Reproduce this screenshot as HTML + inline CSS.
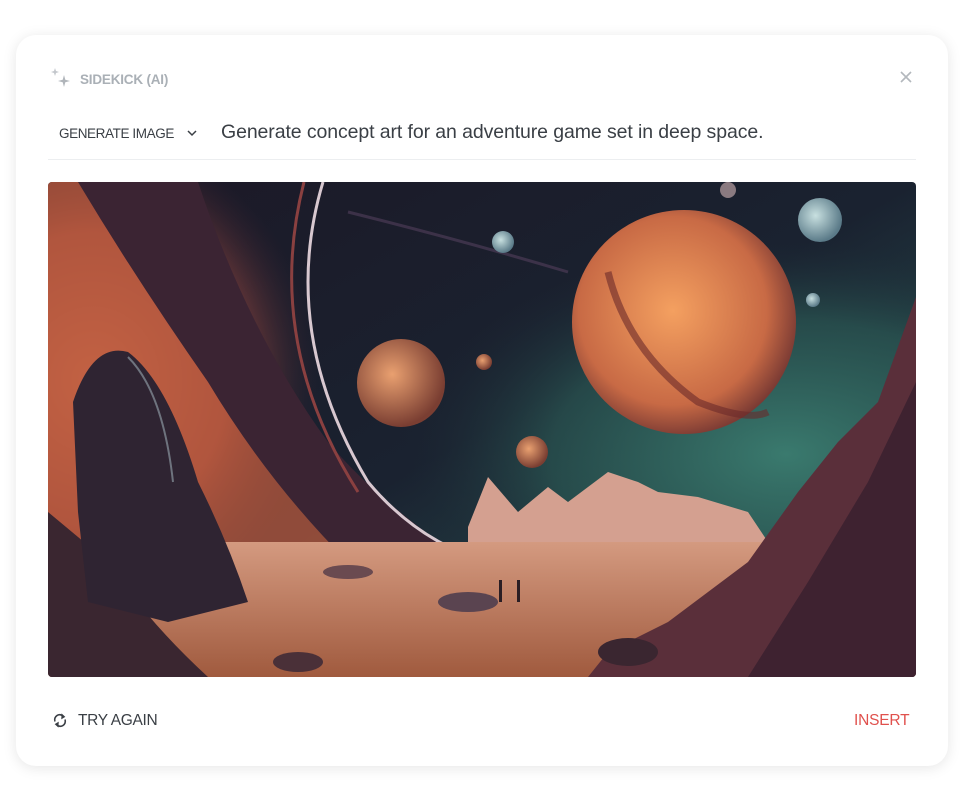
<!DOCTYPE html>
<html><head><meta charset="utf-8"><style>
html,body{margin:0;padding:0;background:#fff;width:967px;height:810px;overflow:hidden;font-family:"Liberation Sans",sans-serif}
.card{position:absolute;left:16px;top:35px;width:932px;height:731px;background:#fff;border-radius:20px;box-shadow:0 2px 14px rgba(0,0,0,.10)}
.hdr{position:absolute;left:80px;top:72px;font-size:13.5px;font-weight:bold;color:#aab0b6;letter-spacing:-.2px}
.sel{position:absolute;left:59px;top:126px;font-size:13.5px;color:#3a3f45;letter-spacing:-.4px}
.prompt{position:absolute;left:221px;top:121px;font-size:19.5px;color:#3a3f45;letter-spacing:-.1px}
.line{position:absolute;left:48px;top:159px;width:868px;height:1px;background:#eceef0}
.img{position:absolute;left:48px;top:182px;width:868px;height:495px;border-radius:4px;overflow:hidden}
.try{position:absolute;left:78px;top:712px;font-size:15.5px;color:#3a3f45;letter-spacing:-.3px}
.ins{position:absolute;left:854px;top:712px;font-size:15.5px;color:#e0514d;letter-spacing:-.2px}
</style></head><body>
<div class="card"></div>
<svg style="position:absolute;left:50px;top:66px" width="24" height="24" viewBox="0 0 24 24"><path d="M5 2 L6 5 L9 6 L6 7 L5 10 L4 7 L1 6 L4 5Z" fill="#c3c7cc"/><path d="M14 9 L15.3 13.7 L20 15 L15.3 16.3 L14 21 L12.7 16.3 L8 15 L12.7 13.7Z" fill="#b0b5ba"/></svg>
<div class="hdr">SIDEKICK (AI)</div>
<svg style="position:absolute;left:899px;top:70px" width="14" height="14"><path d="M2 2L12 12M12 2L2 12" stroke="#b3b8bd" stroke-width="1.6"/></svg>
<div class="sel">GENERATE IMAGE</div>
<svg style="position:absolute;left:186px;top:128px" width="12" height="10"><path d="M2 3L6 7L10 3" stroke="#3a3f45" stroke-width="1.5" fill="none"/></svg>
<div class="prompt">Generate concept art for an adventure game set in deep space.</div>
<div class="line"></div>
<div class="img"><svg width="868" height="495" viewBox="0 0 868 495">
<defs>
<linearGradient id="sky" x1="0" y1="0" x2="1" y2="1"><stop offset="0" stop-color="#1c1826"/><stop offset=".5" stop-color="#1a2230"/><stop offset="1" stop-color="#2f6a62"/></linearGradient>
<radialGradient id="teal" cx=".85" cy=".55" r=".45"><stop offset="0" stop-color="#3a7a6e"/><stop offset=".6" stop-color="#2a5652" stop-opacity=".7"/><stop offset="1" stop-color="#1a2230" stop-opacity="0"/></radialGradient>
<radialGradient id="neb" cx=".1" cy=".4" r=".5"><stop offset="0" stop-color="#e07a55"/><stop offset=".6" stop-color="#9a4a40"/><stop offset="1" stop-color="#3a2230" stop-opacity="0"/></radialGradient>
<radialGradient id="pl" cx=".45" cy=".45" r=".6"><stop offset="0" stop-color="#f4a060"/><stop offset=".7" stop-color="#c86a45"/><stop offset="1" stop-color="#6a3030"/></radialGradient>
<radialGradient id="pl2" cx=".4" cy=".4" r=".6"><stop offset="0" stop-color="#e9a070"/><stop offset="1" stop-color="#7a3e32"/></radialGradient>
<radialGradient id="pl3" cx=".4" cy=".4" r=".6"><stop offset="0" stop-color="#c8e0e0"/><stop offset="1" stop-color="#5a7a88"/></radialGradient>
<linearGradient id="gr" x1="0" y1="0" x2="0" y2="1"><stop offset="0" stop-color="#d49a80"/><stop offset="1" stop-color="#a05a3e"/></linearGradient>
</defs>
<rect width="868" height="495" fill="url(#sky)"/>
<rect width="868" height="495" fill="url(#teal)"/>
<rect width="450" height="495" fill="url(#neb)"/>
<path d="M0 0 L120 0 Q150 120 200 220 Q260 330 300 380 L0 400Z" fill="#b85a3e" opacity=".75"/>
<path d="M30 0 L150 0 Q200 150 280 260 Q330 320 420 380 L300 380 Q220 300 160 200 Q90 100 30 0Z" fill="#3b2433"/>
<path d="M275 0 Q230 150 320 300 Q370 360 440 380" stroke="#d8c8d0" stroke-width="3" fill="none"/>
<path d="M256 0 Q215 160 310 310" stroke="#8a4040" stroke-width="3" fill="none"/>
<path d="M300 30 Q420 60 520 90" stroke="#4a3a55" stroke-width="3" fill="none" opacity=".7"/>
<path d="M420 345 L440 295 L470 330 L500 305 L520 320 L560 290 L590 300 L610 310 L650 315 L700 330 L720 360 L420 370Z" fill="#d4a090"/>
<rect x="0" y="360" width="868" height="135" fill="url(#gr)"/>
<path d="M0 330 L0 495 L160 495 Q100 440 60 380Z" fill="#3a2630"/>
<path d="M25 220 Q45 160 80 170 Q120 200 150 300 Q180 360 200 420 L120 440 L40 420 L30 330Z" fill="#2f2432"/>
<path d="M80 175 Q115 210 125 300" stroke="#9aa8b0" stroke-width="2" fill="none" opacity=".6"/>
<path d="M868 115 L830 220 L790 260 L750 310 L700 380 L620 440 L560 470 L540 495 L868 495Z" fill="#5a2f3a"/>
<path d="M868 200 L820 300 L760 400 L700 495 L868 495Z" fill="#3e2230"/>
<circle cx="636" cy="140" r="112" fill="url(#pl)"/>
<path d="M560 90 Q580 170 650 220 Q700 240 720 230" stroke="#6a2a2a" stroke-width="7" fill="none" opacity=".6"/>
<circle cx="353" cy="201" r="44" fill="url(#pl2)"/>
<circle cx="484" cy="270" r="16" fill="url(#pl2)"/>
<circle cx="436" cy="180" r="8" fill="url(#pl2)"/>
<circle cx="455" cy="60" r="11" fill="url(#pl3)"/>
<circle cx="772" cy="38" r="22" fill="url(#pl3)"/>
<circle cx="765" cy="118" r="7" fill="url(#pl3)"/>
<circle cx="680" cy="8" r="8" fill="#8a7a80"/>
<ellipse cx="420" cy="420" rx="30" ry="10" fill="#5a4450"/>
<ellipse cx="300" cy="390" rx="25" ry="7" fill="#6a4a50"/>
<ellipse cx="580" cy="470" rx="30" ry="14" fill="#3a2630"/>
<ellipse cx="250" cy="480" rx="25" ry="10" fill="#4a3038"/>
<rect x="451" y="398" width="3" height="22" fill="#2a1e24"/><rect x="469" y="398" width="3" height="22" fill="#2a1e24"/>
</svg></div>
<svg style="position:absolute;left:52px;top:712px" width="16" height="17" viewBox="0 0 16 17"><path d="M3 9.5A5 5 0 0 1 11.5 4.5M13 7.5A5 5 0 0 1 4.5 12.5" stroke="#3a3f45" stroke-width="1.6" fill="none"/><path d="M10 2.5L12.5 4.8L9.8 6.5Z M6 14.5L3.5 12.2L6.2 10.5Z" fill="#3a3f45" stroke="#3a3f45" stroke-width="1"/></svg>
<div class="try">TRY AGAIN</div>
<div class="ins">INSERT</div>
</body></html>
